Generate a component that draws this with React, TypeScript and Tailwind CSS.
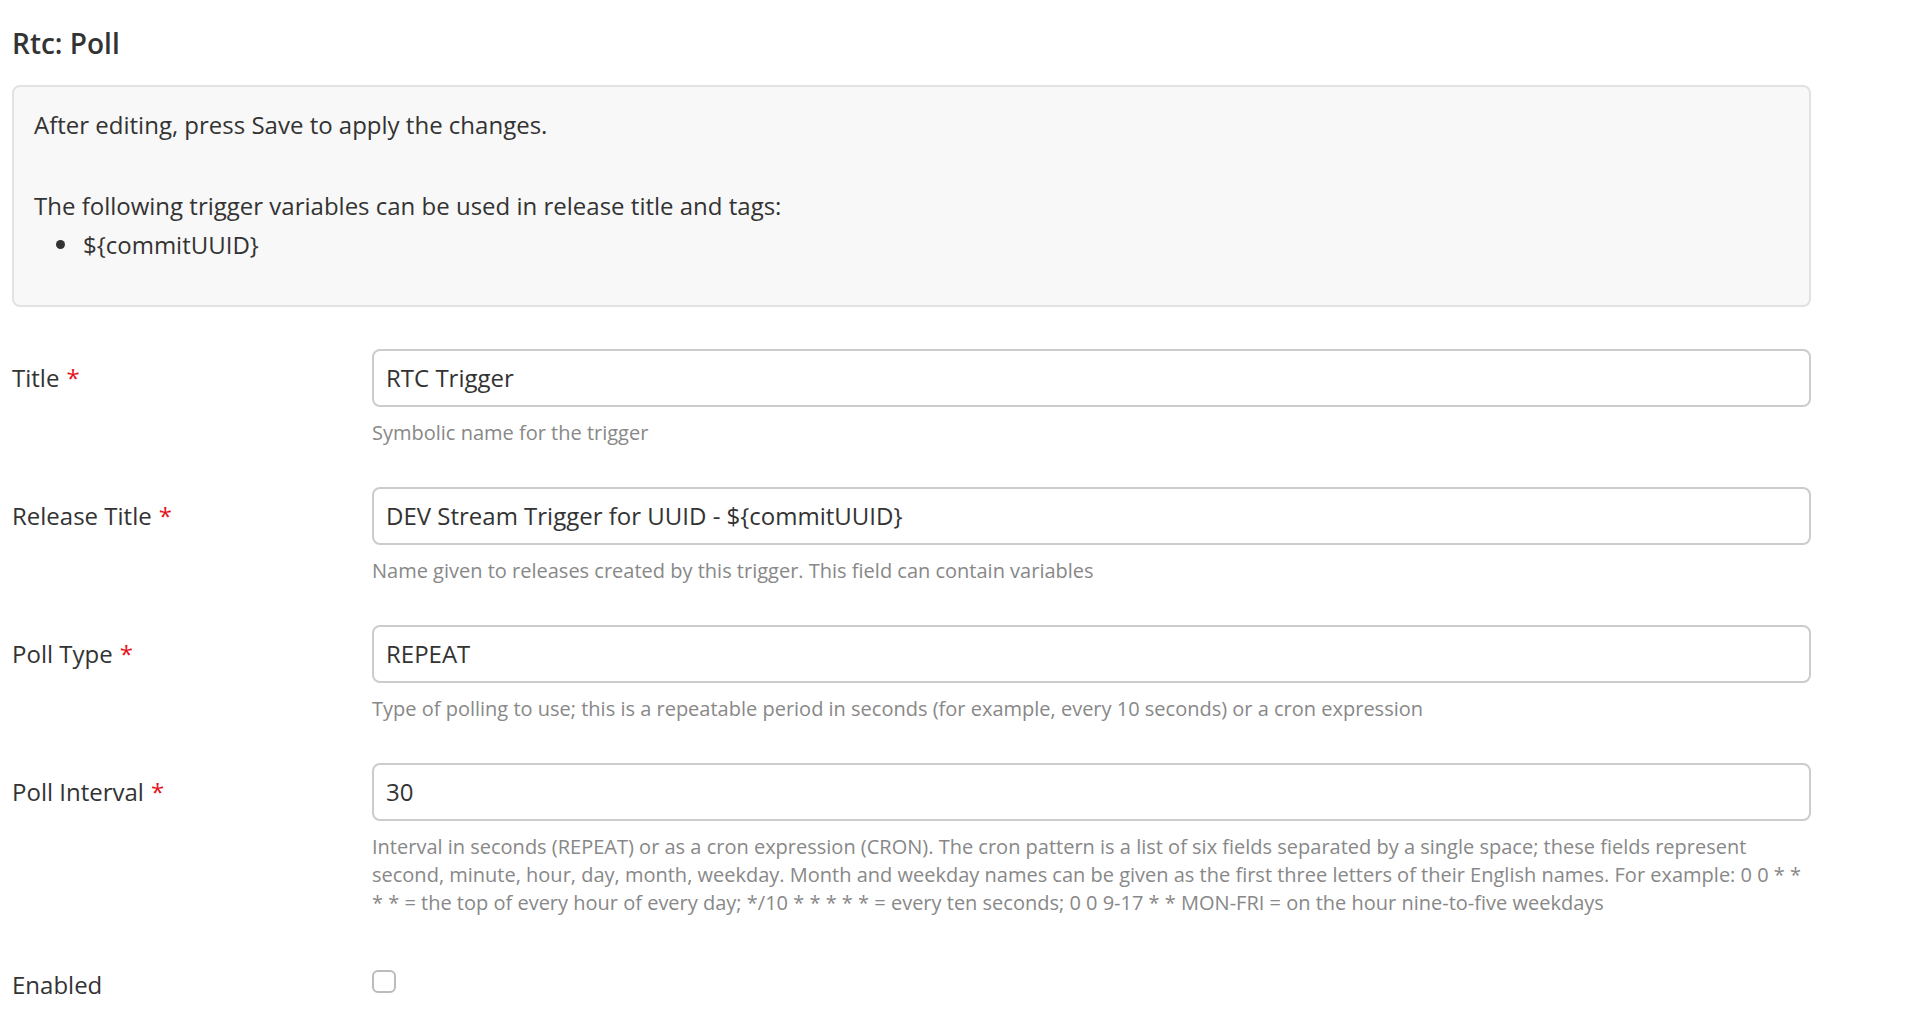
import React from "react";

const font = { fontFamily: '"Open Sans", "Noto Sans", sans-serif' };

function Row({ label, value, help }: { label: string; value: string; help: React.ReactNode }) {
  return (
    <div className="flex mb-[40px]">
      <div className="w-[360px] h-[58px] flex items-center text-[24px] text-[#333333]">
        <span>{label}</span>
        <span className="text-[#e8111a] ml-[7px]">*</span>
      </div>
      <div className="flex-1">
        <div className="h-[58px] border-2 border-[#cccccc] rounded-[8px] bg-white flex items-center px-[12px] text-[24px] text-[#333333]">
          {value}
        </div>
        <div className="mt-[12px] text-[20px] leading-[28px] text-[#888888]">{help}</div>
      </div>
    </div>
  );
}

export default function App() {
  return (
    <div className="min-h-screen bg-white" style={font}>
      <div className="pl-[12px] w-[1811px]">
        <h1 className="pt-[26px] text-[28px] leading-[34px] font-semibold text-[#333333]">Rtc: Poll</h1>
        <div className="mt-[25px] border-2 border-[#e2e2e2] bg-[#f8f8f8] rounded-[8px] pl-[20px] pt-[18px] pb-[41px] text-[24px] leading-[39px] text-[#333333]">
          <p>After editing, press Save to apply the changes.</p>
          <p className="mt-[42px]">The following trigger variables can be used in release title and tags:</p>
          <ul className="pl-[22px]">
            <li className="flex items-center">
              <span className="w-[9px] h-[9px] rounded-full bg-[#333333] mr-[18px]" />
              <span>{"${commitUUID}"}</span>
            </li>
          </ul>
        </div>
        <div className="mt-[42px]">
          <Row label="Title" value="RTC Trigger" help="Symbolic name for the trigger" />
          <Row
            label="Release Title"
            value={"DEV Stream Trigger for UUID - ${commitUUID}"}
            help="Name given to releases created by this trigger. This field can contain variables"
          />
          <Row
            label="Poll Type"
            value="REPEAT"
            help="Type of polling to use; this is a repeatable period in seconds (for example, every 10 seconds) or a cron expression"
          />
          <div className="flex">
            <div className="w-[360px] h-[58px] flex items-center text-[24px] text-[#333333]">
              <span>Poll Interval</span>
              <span className="text-[#e8111a] ml-[7px]">*</span>
            </div>
            <div className="flex-1">
              <div className="h-[58px] border-2 border-[#cccccc] rounded-[8px] bg-white flex items-center px-[12px] text-[24px] text-[#333333]">
                30
              </div>
              <div className="mt-[12px] text-[20px] leading-[28px] text-[#888888]">
                <div className="whitespace-nowrap">Interval in seconds (REPEAT) or as a cron expression (CRON). The cron pattern is a list of six fields separated by a single space; these fields represent</div>
                <div className="whitespace-nowrap">second, minute, hour, day, month, weekday. Month and weekday names can be given as the first three letters of their English names. For example: 0 0 * *</div>
                <div className="whitespace-nowrap">* * = the top of every hour of every day; */10 * * * * * = every ten seconds; 0 0 9-17 * * MON-FRI = on the hour nine-to-five weekdays</div>
              </div>
            </div>
          </div>
          <div className="flex items-start mt-[51px]">
            <div className="w-[360px] h-[34px] flex items-center text-[24px] text-[#333333]">Enabled</div>
            <div className="w-[24px] h-[23px] mt-[2px] border-2 border-[#bbbbbb] rounded-[6px] bg-white" />
          </div>
        </div>
      </div>
    </div>
  );
}
